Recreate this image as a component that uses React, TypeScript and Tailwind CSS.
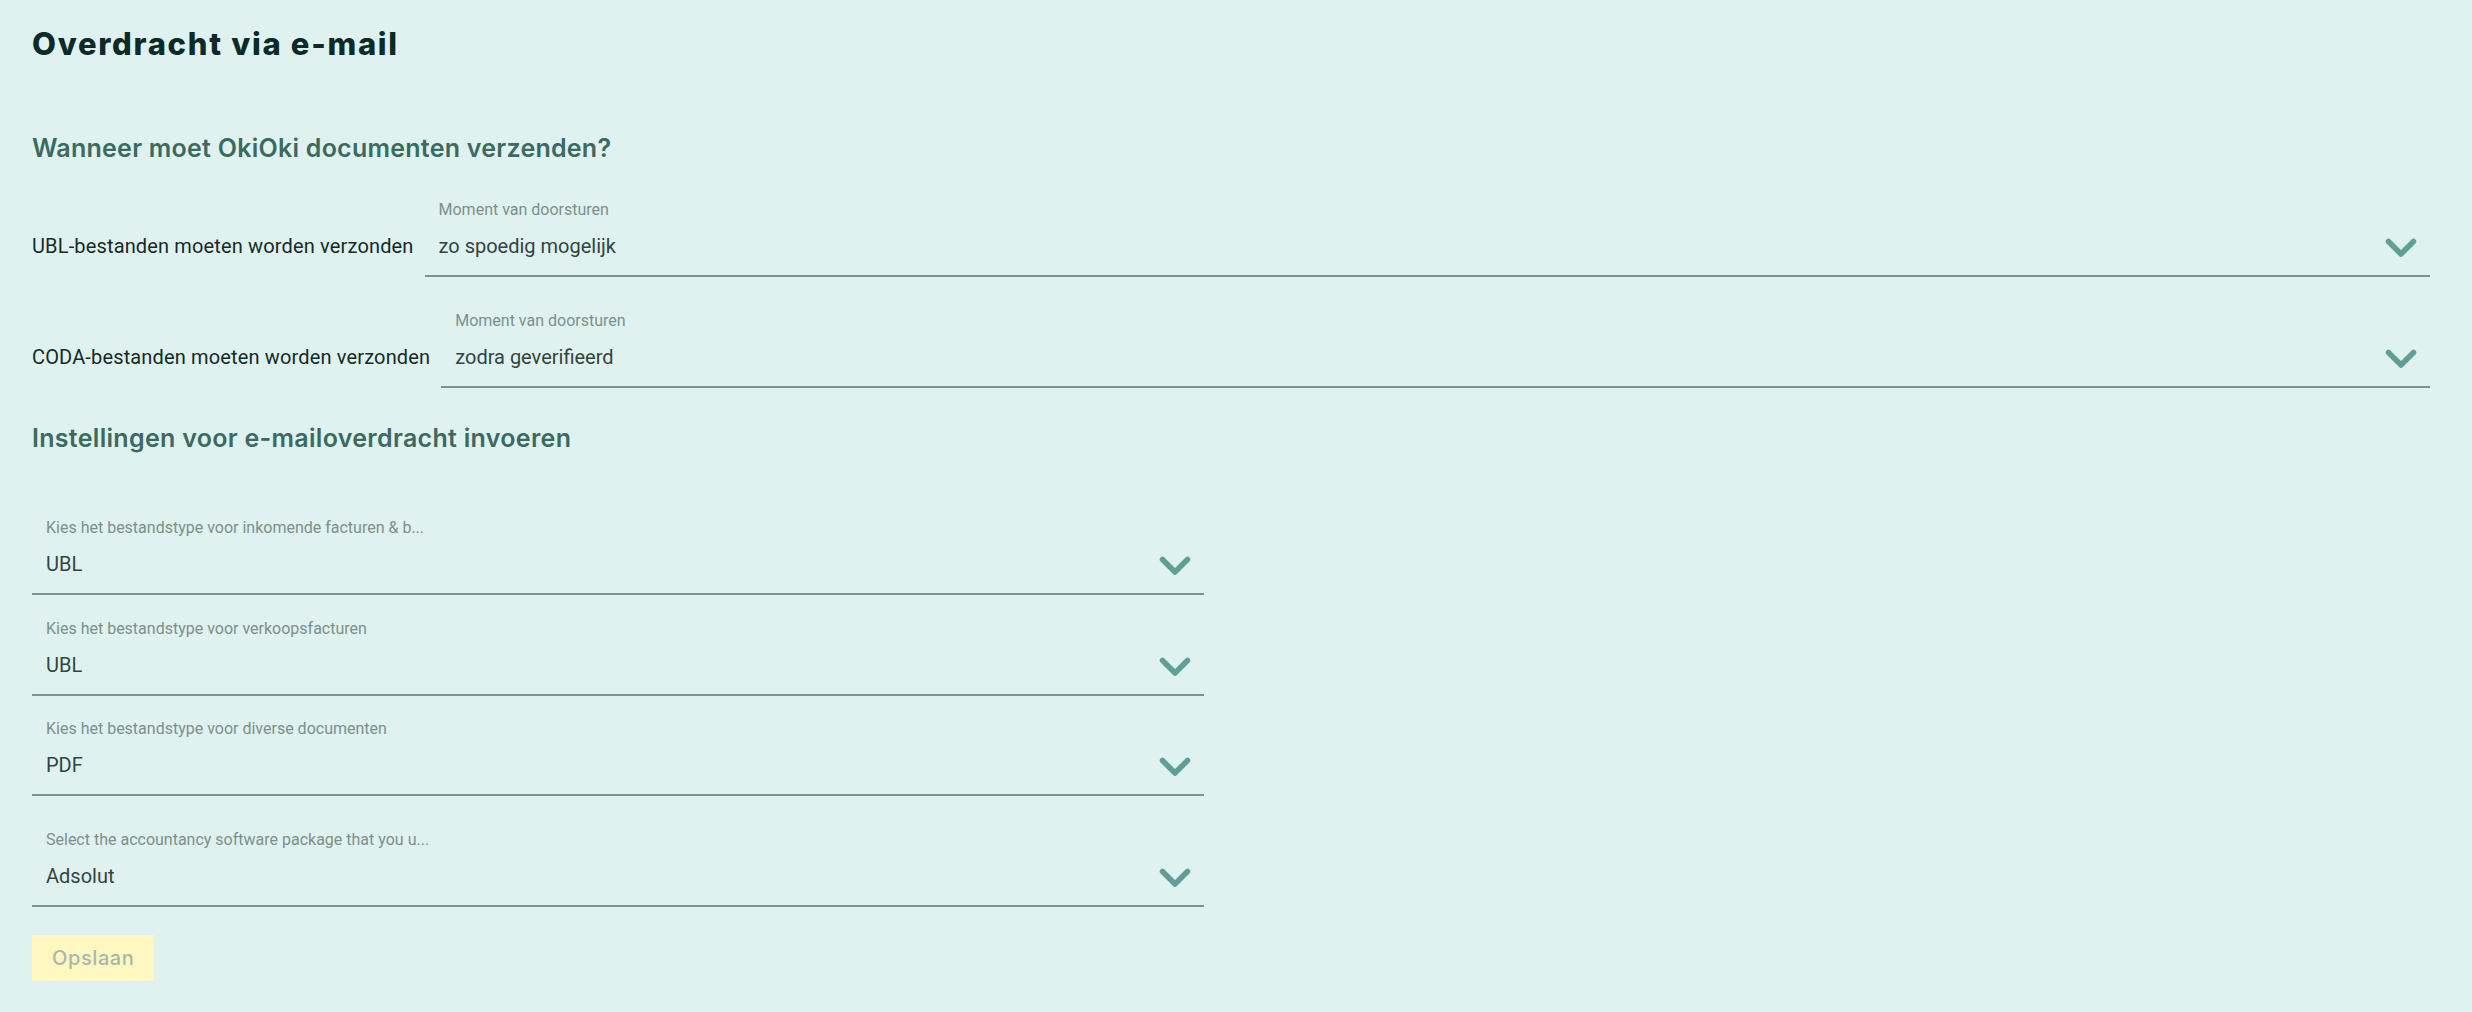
import React from "react";

const Chevron = () => (
  <svg width="32" height="20" viewBox="0 0 32 20" className="shrink-0 mt-[4px]">
    <path d="M3.5 3.5 L16 16 L28.5 3.5" fill="none" stroke="#5f9f95" strokeWidth="5.5" strokeLinecap="round" strokeLinejoin="round" />
  </svg>
);

function Select({ label, value, className }: { label: string; value: string; className?: string }) {
  return (
    <div className={"flex flex-col border-b-2 border-[#7f928e] pl-[14px] pr-[13px] pb-[15px] " + (className ?? "")}>
      <div className="text-[16px] leading-[20px] text-[#7e8f8b] whitespace-nowrap">{label}</div>
      <div className="mt-[12px] flex items-center justify-between">
        <span className="text-[20px] leading-[28px] text-[#33443f]">{value}</span>
        <Chevron />
      </div>
    </div>
  );
}

function Row({ label, value, className }: { label: string; value: string; className?: string }) {
  return (
    <div className={"flex items-end gap-[11px] " + (className ?? "")}>
      <div className="pb-[17px] text-[20px] leading-[28px] tracking-[0.15px] text-[#142a27] whitespace-nowrap">{label}</div>
      <Select label="Moment van doorsturen" value={value} className="flex-1" />
    </div>
  );
}

export default function App() {
  return (
    <div
      className="min-h-[1012px] bg-[#dff2ef] pl-[32px] pr-[42px] pt-[24px]"
      style={{ fontFamily: "Roboto, 'Liberation Sans', sans-serif" }}
    >
      <h1
        className="text-[31px] leading-[40px] font-extrabold tracking-[1.7px] text-[#0c2b28]"
        style={{ fontFamily: "Inter, sans-serif" }}
      >
        Overdracht via e-mail
      </h1>
      <h2
        className="mt-[68px] text-[25px] leading-[32px] font-semibold tracking-[0.25px] text-[#3b6a60]"
        style={{ fontFamily: "Inter, sans-serif" }}
      >
        Wanneer moet OkiOki documenten verzenden?
      </h2>
      <Row label="UBL-bestanden moeten worden verzonden" value="zo spoedig mogelijk" className="mt-[36px]" />
      <Row label="CODA-bestanden moeten worden verzonden" value="zodra geverifieerd" className="mt-[34px]" />
      <h2
        className="mt-[34px] text-[25px] leading-[32px] font-semibold tracking-[0.3px] text-[#3b6a60]"
        style={{ fontFamily: "Inter, sans-serif" }}
      >
        Instellingen voor e-mailoverdracht invoeren
      </h2>
      <div className="w-[1172px] flex flex-col">
        <Select label="Kies het bestandstype voor inkomende facturen & b..." value="UBL" className="mt-[64px]" />
        <Select label="Kies het bestandstype voor verkoopsfacturen" value="UBL" className="mt-[24px]" />
        <Select label="Kies het bestandstype voor diverse documenten" value="PDF" className="mt-[23px]" />
        <Select label="Select the accountancy software package that you u..." value="Adsolut" className="mt-[34px]" />
      </div>
      <button
        className="mt-[28px] h-[46px] px-[20px] bg-[#fff7c0] text-[20px] font-medium tracking-[0.6px] text-[#a8b7b3]"
        style={{ fontFamily: "Inter, sans-serif" }}
      >
        Opslaan
      </button>
    </div>
  );
}
